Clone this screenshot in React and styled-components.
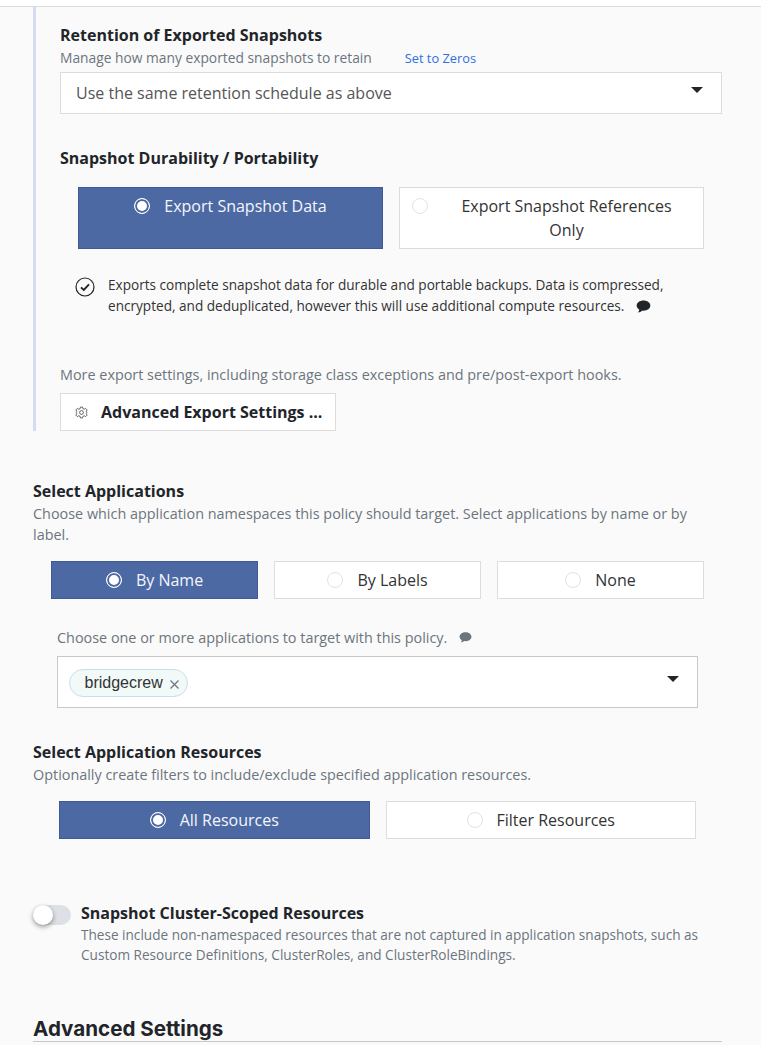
import React from "react";
import styled, { createGlobalStyle } from "styled-components";

const GlobalStyle = createGlobalStyle`
  html, body {
    margin: 0;
    padding: 0;
    height: 1045px;
    overflow: hidden;
    background: #fafafa;
    font-family: "Open Sans", sans-serif;
    color: #212529;
  }
`;

const TopBar = styled.div`
  height: 6px;
  background: #fff;
  border-bottom: 1px solid #dcdcdc;
`;

const Page = styled.div`
  padding: 0 39px 0 33px;
`;

const ExportPanel = styled.section`
  border-left: 3px solid #d3dcf0;
  padding: 17px 0 0 24px;
  height: 407px;
`;

const Heading = styled.h3`
  margin: ${(p) => p.$top || 0}px 0 0;
  font-size: 16px;
  line-height: 22px;
  font-weight: 700;
  color: #212529;
`;

const Hint = styled.p`
  margin: ${(p) => p.$top || 0}px 0 0;
  font-size: ${(p) => p.$size || 14.4}px;
  line-height: 21.6px;
  color: #6c757d;
`;

const SetZeros = styled.a`
  margin-left: 33px;
  font-size: 12.8px;
  color: #2f6fde;
`;

const SelectBox = styled.div`
  display: flex;
  align-items: center;
  justify-content: space-between;
  box-sizing: border-box;
  height: ${(p) => p.$height}px;
  margin: ${(p) => p.$top || 0}px ${(p) => p.$right || 0}px 0 ${(p) => p.$left || 0}px;
  padding: 0 ${(p) => p.$padRight}px 0 ${(p) => p.$padLeft}px;
  background: #fff;
  border: 1px solid ${(p) => p.$border || "#dcdcdc"};
  font-size: 16px;
  color: #555;
`;

const Caret = styled.span`
  width: 0;
  height: 0;
  margin-top: -5px;
  border-left: 6px solid transparent;
  border-right: 6px solid transparent;
  border-top: 6px solid #212529;
`;

const RadioRow = styled.div`
  display: grid;
  grid-auto-flow: column;
  grid-auto-columns: 1fr;
  gap: 16px;
  margin: ${(p) => p.$top || 0}px ${(p) => p.$right || 0}px 0 ${(p) => p.$left || 0}px;
`;

const RadioCard = styled.div`
  position: relative;
  box-sizing: border-box;
  height: ${(p) => p.$height}px;
  display: flex;
  justify-content: center;
  align-items: ${(p) => (p.$tall ? "flex-start" : "center")};
  padding: ${(p) => (p.$tall ? "6px 20px 0" : "0")};
  padding-left: ${(p) => (p.$wrapLabel ? "50px" : "")};
  gap: 14px;
  font-size: 16px;
  line-height: 24px;
  text-align: center;
  color: ${(p) => (p.$active ? "#f4f6fb" : "#333")};
  background: ${(p) => (p.$active ? "#4c69a4" : "#fff")};
  border: 1px solid ${(p) => (p.$active ? "#3f5a92" : "#dcdcdc")};
`;

const RadioDot = styled.span`
  flex: none;
  box-sizing: border-box;
  width: 16px;
  height: 16px;
  margin-top: ${(p) => (p.$tall ? "4px" : "0")};
  border-radius: 50%;
  background: #fff;
  border: 1px solid ${(p) => (p.$active ? "#fff" : "#e3e3e3")};
  box-shadow: ${(p) => (p.$active ? "inset 0 0 0 2px #4c69a4" : "none")};
`;

// this one sits at the far left of its card, away from the centred label
const CornerDot = styled(RadioDot)`
  position: absolute;
  left: 12px;
  top: 10px;
  margin: 0;
`;

const InfoRow = styled.div`
  display: flex;
  gap: 13px;
  margin: 25px 0 0 15px;
  font-size: 13.6px;
  line-height: 21px;
  color: #333;
`;

const CheckIcon = styled.svg`
  flex: none;
  width: 20px;
  height: 20px;
  margin-top: 3px;
`;

const Bubble = styled.svg`
  display: inline-block;
  width: ${(p) => p.$size}px;
  height: ${(p) => p.$size}px;
  margin-left: ${(p) => p.$gap}px;
  vertical-align: ${(p) => p.$drop}px;
  fill: ${(p) => p.$color};
`;

const AdvancedButton = styled.div`
  display: inline-flex;
  align-items: center;
  box-sizing: border-box;
  height: 38px;
  margin-top: 8px;
  padding: 0 13px 0 14px;
  gap: 13px;
  background: #fff;
  border: 1px solid #dcdcdc;
  font-size: 16px;
  font-weight: 700;
  white-space: nowrap;
  color: #212529;
`;

const Section = styled.section`
  margin-top: ${(p) => p.$top}px;
`;

const Pick = styled(Hint)`
  margin: 28px 0 0 24px;
`;

const Chip = styled.span`
  display: inline-flex;
  align-items: center;
  box-sizing: border-box;
  height: 28px;
  margin-top: 3px;
  padding: 0 7px 0 14.5px;
  gap: 6.5px;
  border-radius: 15px;
  background: #f1f9f9;
  border: 1px solid #c5e0ea;
  font-family: "Liberation Sans", sans-serif;
  font-size: 16px;
  color: #333;
`;

const ChipX = styled.svg`
  width: 11px;
  height: 11px;
  margin-top: 2px;
`;

const ToggleRow = styled.div`
  display: flex;
  gap: 10px;
  margin-top: 63px;
`;

const Toggle = styled.div`
  position: relative;
  flex: none;
  width: 38px;
  height: 20px;
  margin-top: 3px;
  border-radius: 10px;
  background: #dde1e7;
`;

const Knob = styled.span`
  position: absolute;
  left: 0;
  top: 0;
  width: 20px;
  height: 20px;
  border-radius: 50%;
  background: #fff;
  box-shadow: 0 2px 5px rgba(0, 0, 0, 0.4);
`;

const ToggleHint = styled.p`
  margin: 1px 0 0;
  font-size: 13.6px;
  line-height: 20px;
  color: #6c757d;
`;

const BigTitle = styled.h2`
  margin: 52px 0 0;
  font-family: Inter, sans-serif;
  font-size: 20.6px;
  line-height: 24px;
  font-weight: 700;
  color: #212529;
  border-bottom: 1px solid #c8c8c8;
`;

const BubblePath = "M8 1.5C3.9 1.5.7 3.9.7 7c0 1.8 1.1 3.3 2.8 4.3-.1 1-.6 2.2-1.3 3 1.5-.2 3.1-.9 4.1-1.9.5.1 1.1.1 1.7.1 4.1 0 7.3-2.4 7.3-5.5S12.1 1.500 8 1.500z";

export default function App() {
  return (
    <>
      <GlobalStyle />
      <TopBar />
      <Page>
        <ExportPanel>
          <Heading>Retention of Exported Snapshots</Heading>
          <Hint $top={1} $size={13.8}>
            Manage how many exported snapshots to retain
            <SetZeros>Set to Zeros</SetZeros>
          </Hint>
          <SelectBox $height={42} $top={2} $padLeft={15} $padRight={18}>
            Use the same retention schedule as above
            <Caret />
          </SelectBox>

          <Heading $top={33}>Snapshot Durability / Portability</Heading>
          <RadioRow $top={18} $left={18} $right={18}>
            <RadioCard $active $tall $height={62}>
              <RadioDot $active $tall />
              Export Snapshot Data
            </RadioCard>
            <RadioCard $tall $wrapLabel $height={62}>
              <CornerDot />
              Export Snapshot References Only
            </RadioCard>
          </RadioRow>

          <InfoRow>
            <CheckIcon viewBox="0 0 20 20" fill="none" stroke="#212529">
              <circle cx="10" cy="10" r="9" strokeWidth="1.2" />
              <path d="M6 10.400l2.800 2.600L14 7.400" strokeWidth="1.9" />
            </CheckIcon>
            <span>
              Exports complete snapshot data for durable and portable backups. Data is compressed, encrypted, and deduplicated, however this will use additional compute resources.
              <Bubble viewBox="0 0 16 16" $size={15} $gap={12} $drop={-3} $color="#212529">
                <path d={BubblePath} />
              </Bubble>
            </span>
          </InfoRow>

          <Hint $top={48}>More export settings, including storage class exceptions and pre/post-export hooks.</Hint>
          <AdvancedButton>
            <svg width="13" height="13" viewBox="0 0 24 24" fill="none" stroke="#444" strokeWidth="1.5">
              <circle cx="12" cy="12" r="3.5" />
              <path d="M10 2h4l.6 3 2.4 1 2.6-1.6 2.8 2.8L20.8 9.800l1 2.200-1 2.200 1.600 2.600-2.800 2.800-2.600-1.600-2.400 1-.6 3h-4l-.6-3-2.400-1-2.600 1.600-2.800-2.800 1.600-2.600-1-2.200 1-2.200L1.600 7.200l2.800-2.800L7 6l2.400-1z" />
            </svg>
            Advanced Export Settings ...
          </AdvancedButton>
        </ExportPanel>

        <Section $top={49}>
          <Heading>Select Applications</Heading>
          <Hint $top={0.6}>
            Choose which application namespaces this policy should target. Select applications by name or by label.
          </Hint>
          <RadioRow $top={15.4} $left={18} $right={18}>
            <RadioCard $active $height={38}>
              <RadioDot $active />
              By Name
            </RadioCard>
            <RadioCard $height={38}>
              <RadioDot />
              By Labels
            </RadioCard>
            <RadioCard $height={38}>
              <RadioDot />
              None
            </RadioCard>
          </RadioRow>
          <Pick>
            Choose one or more applications to target with this policy.
            <Bubble viewBox="0 0 16 16" $size={13} $gap={12} $drop={-1} $color="#6c757d">
              <path d={BubblePath} />
            </Bubble>
          </Pick>
          <SelectBox $height={52} $top={7} $left={24} $right={24} $padLeft={11} $padRight={18} $border="#c8c8c8">
            <Chip>
              bridgecrew
              <ChipX viewBox="0 0 11 11" stroke="#6c757d" strokeWidth="1.2">
                <path d="M1.500 1.500l8 8M9.500 1.500l-8 8" />
              </ChipX>
            </Chip>
            <Caret />
          </SelectBox>
        </Section>

        <Section $top={33}>
          <Heading>Select Application Resources</Heading>
          <Hint $top={1}>Optionally create filters to include/exclude specified application resources.</Hint>
          <RadioRow $top={16} $left={26} $right={26}>
            <RadioCard $active $height={38}>
              <RadioDot $active />
              All Resources
            </RadioCard>
            <RadioCard $height={38}>
              <RadioDot />
              Filter Resources
            </RadioCard>
          </RadioRow>
        </Section>

        <ToggleRow>
          <Toggle>
            <Knob />
          </Toggle>
          <div>
            <Heading>Snapshot Cluster-Scoped Resources</Heading>
            <ToggleHint>
              These include non-namespaced resources that are not captured in application snapshots, such as Custom Resource Definitions, ClusterRoles, and ClusterRoleBindings.
            </ToggleHint>
          </div>
        </ToggleRow>

        <BigTitle>Advanced Settings</BigTitle>
      </Page>
    </>
  );
}
